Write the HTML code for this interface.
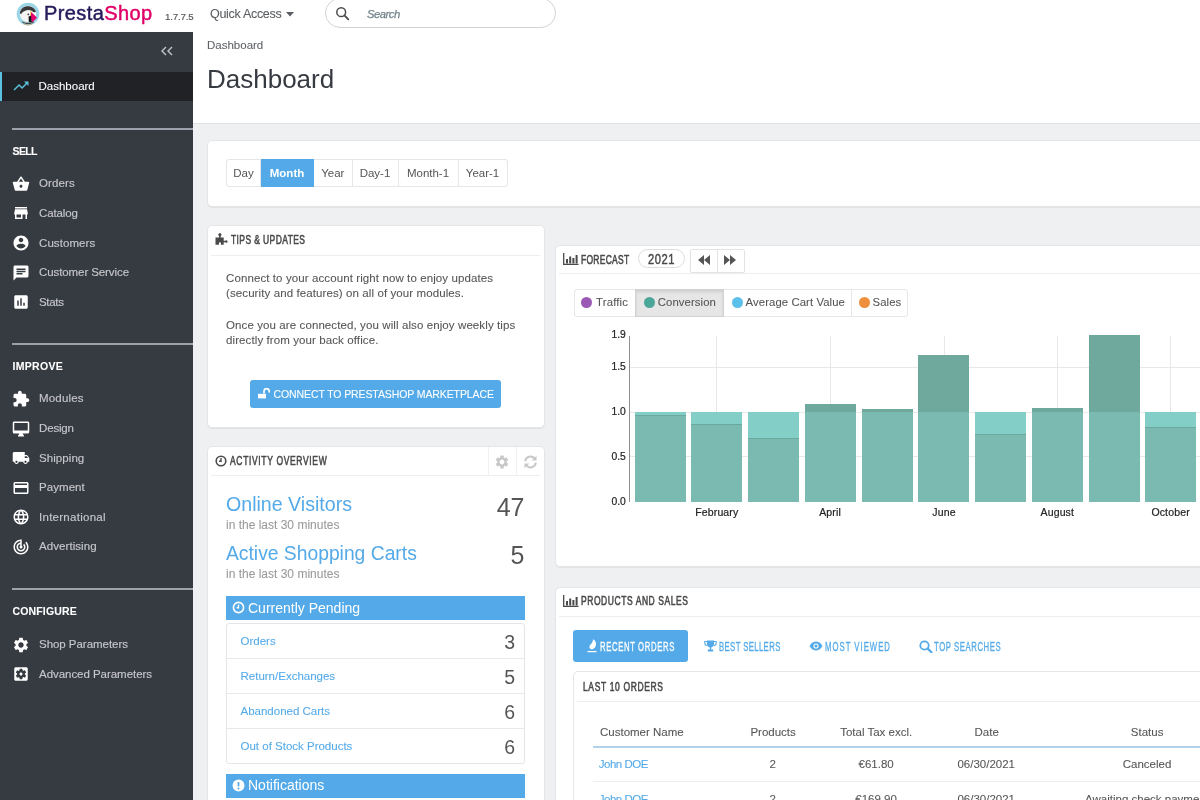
<!DOCTYPE html>
<html><head><meta charset="utf-8">
<style>
*{box-sizing:border-box}
html,body{margin:0;padding:0}
body{width:1200px;height:800px;overflow:hidden;position:relative;-webkit-font-smoothing:antialiased;will-change:transform;background:#eff0f2;font-family:"Liberation Sans",sans-serif;color:#555}
.a{position:absolute}
.t{position:absolute;white-space:nowrap;line-height:1;-webkit-text-stroke:0.08px currentColor}
.cd{display:inline-block;transform-origin:0 0}
#hdr{left:0;top:0;width:1200px;height:32px;background:#fff}
#side{left:0;top:32px;width:193px;height:768px;background:#363a41}
#phead{left:193px;top:32px;width:1007px;height:92px;background:#fff;border-bottom:1px solid #e0e3e6}
.panel{position:absolute;background:#fff;border:1px solid #e3e5e8;border-radius:5px;box-shadow:0 1px 1px rgba(0,0,0,.06)}
.hline{position:absolute;height:1px;background:#eceeef}
.nav{color:#c6c7ca;font-size:11.5px;-webkit-text-stroke:0.15px #c6c7ca}
.navh{color:#fff;font-weight:bold;font-size:10.5px}
.btn{position:absolute;top:159px;height:28px;border:1px solid #e4e6e9;border-left:none;background:#fff;color:#555;font-size:11.5px;line-height:1;text-align:center}
.btn span{position:absolute;left:0;right:0;top:7.6px}
.ph{position:absolute;white-space:nowrap;line-height:1;font-size:12.5px;color:#4a4a4a;transform-origin:0 0;-webkit-text-stroke:0.6px #4a4a4a}
.sico{position:absolute;left:13px;width:16px;height:16px;fill:#fff}
.sep{position:absolute;left:12px;width:181px;height:2px;background:#9ca2ab}
</style></head><body>
<!-- HEADER -->
<div id="hdr" class="a">
<svg class="a" style="left:16.4px;top:1.9px" width="24" height="24" viewBox="0 0 24 24">
<circle cx="12" cy="12" r="11.3" fill="#9ad6e5"/>
<circle cx="12" cy="12" r="8.2" fill="#f4f4f4"/>
<path d="M3.9 11.5 C4.2 7 7.5 4.3 12 4.3 C16.2 4.3 19.3 6.8 19.9 10 L17.5 10.3 C15.5 8.3 13.5 7.8 11 8.2 C8.5 8.6 6.5 9.8 5.2 12 Z" fill="#3a3a3c"/>
<circle cx="12.3" cy="12.3" r="0.9" fill="#3a3a3c"/>
<path d="M14.3 9.3 L15.6 9.6 L15.2 14 L14.2 13.6 Z" fill="#efc13f"/>
<path d="M15.2 9.9 L21 15.8 L15.8 20.8 L14.8 15.2 Z" fill="#e3006d"/>
<path d="M12.6 14.5 L15 13.8 L15.8 20.5 L12.8 20 Z" fill="#151515"/>
<path d="M6 19.2 C8.5 21.2 15.5 21.4 18 19.3 L17.6 20.8 C15 22.7 9 22.7 6.5 20.8 Z" fill="#4a4a48"/>
<path d="M7.5 21.3 C10 22.8 14 22.8 16.5 21.3 L16 22.6 C13.5 23.8 10.5 23.8 8 22.6 Z" fill="#c2b497"/>
</svg>
<div class="t" style="left:44px;top:3.2px;font-size:20px;letter-spacing:0.4px;color:#251b5b;-webkit-text-stroke:0.45px #251b5b">Presta<span style="color:#df0067;-webkit-text-stroke:0.45px #df0067">Shop</span></div>
<div class="t" style="left:165px;top:12px;font-size:9.8px;letter-spacing:-0.2px;color:#555;-webkit-text-stroke:0.15px #555">1.7.7.5</div>
<div class="t" style="left:210px;top:7.8px;font-size:12.5px;letter-spacing:-0.3px;color:#5b5e63">Quick Access</div>
<svg class="a" style="left:286px;top:12px" width="8" height="5" viewBox="0 0 8 5"><path d="M0 0 L8 0 L4 4.5Z" fill="#5b5e63"/></svg>
<div class="a" style="left:325px;top:-2px;width:231px;height:30px;border:1px solid #cfd4d6;border-radius:15px"></div>
<svg class="a" style="left:335px;top:6px" width="15" height="15" viewBox="0 0 15 15"><circle cx="6.2" cy="6.2" r="4.4" fill="none" stroke="#4a4a4a" stroke-width="1.5"/><path d="M9.4 9.4 L13.3 13.3" stroke="#4a4a4a" stroke-width="1.8" stroke-linecap="round"/></svg>
<div class="t" style="left:367px;top:9.4px;font-size:11.3px;font-style:italic;letter-spacing:-0.5px;color:#72838a;-webkit-text-stroke:0.25px #72838a">Search</div>
</div>
<!-- SIDEBAR -->
<div id="side" class="a">
<svg class="a" style="left:160px;top:14px" width="14" height="10" viewBox="0 0 14 10"><path d="M6 1 L2 5 L6 9 M12 1 L8 5 L12 9" fill="none" stroke="#c4c6ca" stroke-width="1.4"/></svg>
<div class="a" style="left:0;top:40px;width:193px;height:29px;background:#202226"></div><div class="a" style="left:0;top:40px;width:2px;height:29px;background:#5ac2df"></div>
<svg class="a" style="left:11.5px;top:45px" width="18" height="18" viewBox="0 0 24 24"><path fill="#5ac2df" d="M16 6l2.29 2.29-4.88 4.88-4-4L2 16.59 3.41 18l6-6 4 4 6.3-6.29L22 12V6z"/></svg><div class="t" style="left:38.5px;top:49.27px;font-size:11.5px;color:#fff">Dashboard</div>
<div class="sep" style="top:96px"></div>
<div class="t navh" style="left:12.5px;top:113.51px;letter-spacing:-0.6px">SELL</div>
<svg class="a" style="left:11.75px;top:142.75px" width="18" height="18" viewBox="0 0 24 24"><path fill="#fff" d="M17.21 9l-4.38-6.56c-.19-.28-.51-.42-.83-.42-.32 0-.64.14-.83.43L6.79 9H2c-.55 0-1 .45-1 1 0 .09.01.18.04.27l2.54 9.27c.23.84 1 1.46 1.92 1.46h13c.92 0 1.69-.62 1.93-1.46l2.54-9.27L23 10c0-.55-.45-1-1-1h-4.79zM9 9l3-4.4L15 9H9zm3 8c-1.1 0-2-.9-2-2s.9-2 2-2 2 .9 2 2-.9 2-2 2z"/></svg><div class="t nav" style="left:39px;top:146.32px;letter-spacing:0.13px">Orders</div>
<svg class="a" style="left:11.75px;top:172.35px" width="18" height="18" viewBox="0 0 24 24"><path fill="#fff" d="M20 4H4v2h16V4zm1 10v-2l-1-5H4l-1 5v2h1v6h10v-6h4v6h2v-6h1zm-9 4H6v-4h6v4z"/></svg><div class="t nav" style="left:39px;top:175.92px;letter-spacing:-0.11px">Catalog</div>
<svg class="a" style="left:11.75px;top:201.95px" width="18" height="18" viewBox="0 0 24 24"><path fill="#fff" d="M12 2C6.48 2 2 6.48 2 12s4.48 10 10 10 10-4.48 10-10S17.52 2 12 2zm0 3c1.66 0 3 1.34 3 3s-1.34 3-3 3-3-1.34-3-3 1.34-3 3-3zm0 14.2c-2.5 0-4.71-1.28-6-3.22.03-1.990 4-3.08 6-3.08 1.99 0 5.97 1.09 6 3.08-1.29 1.94-3.5 3.22-6 3.22z"/></svg><div class="t nav" style="left:39px;top:205.52px;letter-spacing:0.08px">Customers</div>
<svg class="a" style="left:11.75px;top:231.55px" width="18" height="18" viewBox="0 0 24 24"><path fill="#fff" d="M20 2H4c-1.1 0-1.99.9-1.99 2L2 22l4-4h14c1.1 0 2-.9 2-2V4c0-1.1-.9-2-2-2zM6 9h12v2H6V9zm8 5H6v-2h8v2zm4-6H6V6h12v2z"/></svg><div class="t nav" style="left:39px;top:235.12px;letter-spacing:-0.09px">Customer Service</div>
<svg class="a" style="left:11.75px;top:261.15px" width="18" height="18" viewBox="0 0 24 24"><path fill="#fff" d="M19 3H5c-1.1 0-2 .9-2 2v14c0 1.1.9 2 2 2h14c1.1 0 2-.9 2-2V5c0-1.1-.9-2-2-2zM9 17H7v-7h2v7zm4 0h-2V7h2v10zm4 0h-2v-4h2v4z"/></svg><div class="t nav" style="left:39px;top:264.72px;letter-spacing:-0.3px">Stats</div>
<div class="sep" style="top:311px"></div>
<div class="t navh" style="left:12.5px;top:328.61px;letter-spacing:0.3px">IMPROVE</div>
<svg class="a" style="left:11.75px;top:357.90px" width="18" height="18" viewBox="0 0 24 24"><path fill="#fff" d="M20.5 11H19V7c0-1.1-.9-2-2-2h-4V3.5C13 2.12 11.88 1 10.5 1S8 2.12 8 3.5V5H4c-1.1 0-1.99.9-1.99 2v3.8H3.5c1.49 0 2.7 1.21 2.7 2.7s-1.21 2.7-2.7 2.7H2V20c0 1.1.9 2 2 2h3.8v-1.5c0-1.490 1.21-2.7 2.7-2.7 1.49 0 2.7 1.21 2.7 2.7V22H17c1.1 0 2-.9 2-2v-4h1.5c1.38 0 2.5-1.12 2.5-2.5S21.88 11 20.5 11z"/></svg><div class="t nav" style="left:39px;top:361.47px;letter-spacing:0.17px">Modules</div>
<svg class="a" style="left:11.75px;top:387.50px" width="18" height="18" viewBox="0 0 24 24"><path fill="#fff" d="M21 2H3c-1.1 0-2 .9-2 2v12c0 1.1.9 2 2 2h7l-2 3v1h8v-1l-2-3h7c1.1 0 2-.9 2-2V4c0-1.1-.9-2-2-2zm0 12H3V4h18v10z"/></svg><div class="t nav" style="left:39px;top:391.07px;letter-spacing:-0.16px">Design</div>
<svg class="a" style="left:11.75px;top:417.10px" width="18" height="18" viewBox="0 0 24 24"><path fill="#fff" d="M20 8h-3V4H3c-1.1 0-2 .9-2 2v11h2c0 1.66 1.34 3 3 3s3-1.34 3-3h6c0 1.66 1.34 3 3 3s3-1.34 3-3h2v-5l-3-4zM6 18.5c-.83 0-1.5-.67-1.5-1.5s.67-1.5 1.5-1.5 1.5.67 1.5 1.5-.67 1.5-1.5 1.5zm13.5-9l1.96 2.5H17V9.5h2.5zm-1.5 9c-.83 0-1.5-.67-1.5-1.5s.67-1.5 1.5-1.5 1.5.67 1.5 1.5-.67 1.5-1.5 1.5z"/></svg><div class="t nav" style="left:39px;top:420.67px;letter-spacing:0.07px">Shipping</div>
<svg class="a" style="left:11.75px;top:446.70px" width="18" height="18" viewBox="0 0 24 24"><path fill="#fff" d="M20 4H4c-1.11 0-1.99.89-1.99 2L2 18c0 1.11.89 2 2 2h16c1.11 0 2-.89 2-2V6c0-1.11-.89-2-2-2zm0 14H4v-6h16v6zm0-10H4V6h16v2z"/></svg><div class="t nav" style="left:39px;top:450.27px;letter-spacing:0.06px">Payment</div>
<svg class="a" style="left:11.75px;top:476.30px" width="18" height="18" viewBox="0 0 24 24"><path fill="#fff" d="M11.99 2C6.47 2 2 6.48 2 12s4.47 10 9.99 10C17.52 22 22 17.52 22 12S17.52 2 11.99 2zm6.93 6h-2.950c-.32-1.25-.78-2.45-1.38-3.56 1.84.63 3.37 1.91 4.33 3.56zM12 4.04c.83 1.2 1.48 2.53 1.91 3.96h-3.82c.43-1.43 1.08-2.76 1.91-3.96zM4.26 14C4.1 13.36 4 12.69 4 12s.1-1.36.26-2h3.38c-.08.66-.14 1.32-.14 2 0 .68.06 1.34.14 2H4.26zm.82 2h2.95c.32 1.25.78 2.45 1.38 3.56-1.84-.63-3.37-1.9-4.33-3.56zm2.95-8H5.08c.96-1.66 2.49-2.93 4.33-3.56C8.81 5.55 8.35 6.75 8.03 8zM12 19.96c-.83-1.2-1.48-2.53-1.91-3.96h3.82c-.43 1.43-1.08 2.76-1.91 3.96zM14.34 14H9.66c-.09-.66-.16-1.32-.16-2 0-.68.07-1.35.16-2h4.68c.09.65.16 1.32.16 2 0 .68-.07 1.34-.16 2zm.25 5.56c.6-1.11 1.06-2.31 1.38-3.56h2.95c-.96 1.65-2.49 2.93-4.33 3.56zM16.36 14c.08-.66.14-1.32.14-2 0-.68-.06-1.34-.14-2h3.38c.16.64.26 1.31.26 2s-.1 1.36-.26 2h-3.38z"/></svg><div class="t nav" style="left:39px;top:479.87px;letter-spacing:0.27px">International</div>
<svg class="a" style="left:11.75px;top:505.90px" width="18" height="18" viewBox="0 0 24 24"><path fill="#fff" d="M19.07 4.93l-1.41 1.41C19.1 7.79 20 9.79 20 12c0 4.42-3.58 8-8 8s-8-3.58-8-8c0-4.08 3.05-7.44 7-7.93v2.02C8.16 6.57 6 9.03 6 12c0 3.31 2.69 6 6 6s6-2.69 6-6c0-1.66-.67-3.16-1.76-4.24l-1.41 1.41C15.55 9.9 16 10.9 16 12c0 2.21-1.79 4-4 4s-4-1.79-4-4c0-1.86 1.28-3.410 3-3.86v2.14c-.6.35-1 .98-1 1.72 0 1.1.9 2 2 2s2-.9 2-2c0-.74-.4-1.38-1-1.72V2h-1C6.48 2 2 6.48 2 12s4.48 10 10 10 10-4.48 10-10c0-2.76-1.12-5.26-2.93-7.07z"/></svg><div class="t nav" style="left:39px;top:509.47px;letter-spacing:0.07px">Advertising</div>
<div class="sep" style="top:556px"></div>
<div class="t navh" style="left:12.5px;top:573.51px;letter-spacing:0.15px">CONFIGURE</div>
<svg class="a" style="left:11.75px;top:603.50px" width="18" height="18" viewBox="0 0 24 24"><path fill="#fff" d="M19.14 12.94c.04-.3.06-.61.06-.94 0-.32-.02-.64-.07-.94l2.03-1.58c.18-.14.23-.41.12-.61l-1.92-3.32c-.12-.22-.37-.29-.59-.22l-2.39.96c-.5-.38-1.03-.7-1.62-.94l-.36-2.54c-.04-.24-.24-.41-.48-.41h-3.84c-.24 0-.43.17-.47.41l-.36 2.54c-.59.24-1.13.57-1.62.94l-2.39-.96c-.22-.08-.47 0-.59.22L2.74 8.87c-.12.21-.08.47.12.61l2.03 1.58c-.05.3-.09.63-.09.94s.02.64.07.94l-2.03 1.58c-.18.14-.23.41-.12.61l1.92 3.32c.12.22.37.29.59.22l2.39-.96c.5.38 1.03.7 1.62.94l.36 2.54c.05.24.24.41.48.41h3.84c.24 0 .44-.17.47-.41l.36-2.54c.59-.24 1.13-.56 1.62-.94l2.39.96c.22.08.47 0 .59-.22l1.920-3.32c.12-.22.07-.47-.12-.61l-2.01-1.58zM12 15.6c-1.98 0-3.6-1.62-3.6-3.6s1.62-3.6 3.6-3.6 3.6 1.62 3.6 3.6-1.62 3.6-3.6 3.6z"/></svg><div class="t nav" style="left:39px;top:607.07px;letter-spacing:-0.04px">Shop Parameters</div>
<svg class="a" style="left:11.75px;top:633.10px" width="18" height="18" viewBox="0 0 24 24"><path fill="#fff" d="M12 10c-1.1 0-2 .9-2 2s.9 2 2 2 2-.9 2-2-.9-2-2-2zm7-7H5c-1.11 0-2 .9-2 2v14c0 1.1.89 2 2 2h14c1.11 0 2-.9 2-2V5c0-1.1-.89-2-2-2zm-1.75 9c0 .23-.02.46-.05.68l1.48 1.16c.13.11.17.3.08.45l-1.4 2.42c-.09.15-.27.21-.43.15l-1.74-.7c-.36.28-.76.51-1.18.69l-.26 1.85c-.03.17-.18.3-.35.3h-2.8c-.17 0-.32-.13-.35-.29l-.26-1.85c-.43-.18-.82-.41-1.18-.69l-1.74.7c-.16.06-.34 0-.43-.15l-1.4-2.42c-.09-.15-.05-.34.08-.45l1.48-1.16c-.03-.23-.05-.46-.05-.69 0-.23.02-.46.05-.68l-1.48-1.16c-.13-.11-.17-.3-.08-.45l1.4-2.42c.09-.15.27-.21.43-.15l1.74.7c.36-.28.76-.51 1.18-.69l.26-1.85c.03-.17.18-.3.35-.3h2.8c.17 0 .32.13.35.29l.26 1.85c.43.18.82.41 1.18.69l1.74-.7c.16-.06.34 0 .43.15l1.4 2.42c.09.15.05.34-.08.45l-1.48 1.16c.03.23.05.46.05.69z"/></svg><div class="t nav" style="left:39px;top:636.67px;letter-spacing:-0.04px">Advanced Parameters</div>
</div>
<!-- PAGE HEAD -->
<div id="phead" class="a"></div>
<div class="t" style="left:207px;top:39.5px;font-size:11.5px;color:#5f6368">Dashboard</div>
<div class="t" style="left:207px;top:65.7px;-webkit-text-stroke:0;font-size:26px;color:#363a41">Dashboard</div>
<!-- DATE PANEL -->
<div class="panel" style="left:207px;top:140px;width:1020px;height:67px"></div>
<div class="btn" style="left:226px;width:35px;border-left:1px solid #e4e6e9;border-radius:3px 0 0 3px"><span>Day</span></div>
<div class="btn" style="left:261px;width:53px;background:#54aae8;border-color:#54aae8;color:#fff;font-weight:bold"><span>Month</span></div>
<div class="btn" style="left:314px;width:38.5px"><span>Year</span></div>
<div class="btn" style="left:352.5px;width:46px"><span>Day-1</span></div>
<div class="btn" style="left:398.5px;width:60px"><span>Month-1</span></div>
<div class="btn" style="left:458.5px;width:49px;border-radius:0 3px 3px 0"><span>Year-1</span></div>
<!-- TIPS PANEL -->
<div class="panel" style="left:207px;top:225px;width:338px;height:203px"></div>
<svg class="a" style="left:213px;top:232px" width="16" height="14" viewBox="0 0 16 14"><path d="M2.5 5.6H6.1V4.1A1.6 1.6 0 1 1 7.7 4.1V5.6H10.7V8.8H12.3A1.25 1.25 0 1 1 12.3 10.2H10.7V12.8H7.9V11.2A1 1 0 0 0 5.9 11.2V12.8H2.5Z" fill="#4a4a4a"/></svg>
<div class="ph" style="left:231px;top:234.4px;transform:scaleX(0.68);letter-spacing:0.588px">TIPS &amp; UPDATES</div>
<div class="hline" style="left:211px;top:255px;width:329px"></div>
<div class="t" style="left:226px;top:273px;font-size:11.5px;letter-spacing:0.1px;color:#555">Connect to your account right now to enjoy updates</div>
<div class="t" style="left:226px;top:288px;font-size:11.5px;letter-spacing:0.1px;color:#555">(security and features) on all of your modules.</div>
<div class="t" style="left:226px;top:320.3px;font-size:11.5px;letter-spacing:0.1px;color:#555">Once you are connected, you will also enjoy weekly tips</div>
<div class="t" style="left:226px;top:334.8px;font-size:11.5px;letter-spacing:0.1px;color:#555">directly from your back office.</div>
<div class="a" style="left:250px;top:380px;width:251px;height:28px;background:#54aae8;border-radius:3px"></div>
<svg class="a" style="left:257px;top:387.5px" width="14" height="12" viewBox="0 0 14 12"><path d="M1 5.8h8v4.6H1z" fill="#fff"/><path d="M7 5.5V3.2a2.6 2.6 0 0 1 5.2 0V4.5" fill="none" stroke="#fff" stroke-width="1.7"/></svg>
<div class="t" style="left:273.5px;top:388.6px;font-size:10.5px;letter-spacing:-0.1px;color:#fff">CONNECT TO PRESTASHOP MARKETPLACE</div>
<!-- ACTIVITY PANEL -->
<div class="panel" style="left:207px;top:446px;width:338px;height:400px"></div>
<svg class="a" style="left:215px;top:455px" width="12" height="12" viewBox="0 0 12 12"><circle cx="6" cy="6" r="4.8" fill="none" stroke="#4a4a4a" stroke-width="1.6"/><path d="M6 3v3.3H4" fill="none" stroke="#4a4a4a" stroke-width="1.4"/></svg>
<div class="ph" style="left:230px;top:455.4px;transform:scaleX(0.68);letter-spacing:0.972px">ACTIVITY OVERVIEW</div>
<div class="a" style="left:488px;top:447px;width:1px;height:28px;background:#f0f1f2"></div>
<div class="a" style="left:516px;top:447px;width:1px;height:28px;background:#f0f1f2"></div>
<svg class="a" style="left:494px;top:454px" width="16" height="16" viewBox="0 0 24 24"><path fill="#c8c8c8" d="M19.14 12.94c.04-.3.06-.61.06-.94 0-.32-.02-.64-.07-.94l2.03-1.58c.18-.14.23-.41.12-.61l-1.92-3.32c-.12-.22-.37-.29-.59-.22l-2.39.96c-.5-.38-1.03-.7-1.62-.94l-.36-2.54c-.04-.24-.24-.41-.48-.41h-3.84c-.24 0-.43.17-.47.41l-.36 2.54c-.59.24-1.13.57-1.62.94l-2.39-.96c-.22-.08-.47 0-.59.22L2.74 8.87c-.12.21-.08.47.12.61l2.03 1.58c-.05.3-.09.63-.09.94s.02.64.07.94l-2.03 1.58c-.18.14-.23.41-.12.61l1.92 3.32c.12.22.37.29.59.22l2.39-.96c.5.38 1.030.7 1.62.94l.36 2.54c.05.24.24.41.48.41h3.84c.24 0 .44-.17.47-.41l.36-2.54c.59-.24 1.13-.56 1.62-.94l2.39.96c.22.08.47 0 .59-.22l1.92-3.32c.12-.22.07-.47-.12-.61l-2.01-1.58zM12 15.6c-1.98 0-3.6-1.62-3.6-3.6s1.62-3.6 3.6-3.6 3.6 1.62 3.6 3.6-1.62 3.6-3.6 3.6z"/></svg>
<svg class="a" style="left:523px;top:455px" width="15" height="14" viewBox="0 0 15 14"><path d="M2.2 6.3A5.3 5.3 0 0 1 11.6 3.6" fill="none" stroke="#c8c8c8" stroke-width="2"/><path d="M13.5 0.8v4.8H8.7z" fill="#c8c8c8"/><path d="M12.8 7.7A5.3 5.3 0 0 1 3.4 10.4" fill="none" stroke="#c8c8c8" stroke-width="2"/><path d="M1.5 13.2V8.4h4.8z" fill="#c8c8c8"/></svg>
<div class="hline" style="left:211px;top:475px;width:329px"></div>
<div class="t" style="left:226px;top:495.3px;-webkit-text-stroke:0;font-size:19.6px;color:#54aae8">Online Visitors</div>
<div class="t" style="left:226px;top:518.9px;font-size:12px;color:#9a9a9a">in the last 30 minutes</div>
<div class="t" style="left:400px;width:124.5px;text-align:right;top:494.5px;-webkit-text-stroke:0;font-size:25px;color:#555">47</div>
<div class="t" style="left:226px;top:544px;-webkit-text-stroke:0;font-size:19.3px;color:#54aae8">Active Shopping Carts</div>
<div class="t" style="left:226px;top:568.4px;font-size:12px;color:#9a9a9a">in the last 30 minutes</div>
<div class="t" style="left:400px;width:124.5px;text-align:right;top:542.5px;-webkit-text-stroke:0;font-size:25px;color:#555">5</div>
<div class="a" style="left:226px;top:596px;width:299px;height:23.5px;background:#54aae8"></div>
<svg class="a" style="left:232px;top:601px" width="13" height="13" viewBox="0 0 12 12"><circle cx="6" cy="6" r="4.7" fill="none" stroke="#fff" stroke-width="1.5"/><path d="M6 3.2v3H4.2" fill="none" stroke="#fff" stroke-width="1.3"/></svg>
<div class="t" style="left:248px;top:601.1px;-webkit-text-stroke:0;font-size:14px;color:#fff">Currently Pending</div>
<div class="a" style="left:226px;top:623px;width:299px;height:141px;border:1px solid #e3e5e8;border-radius:3px"></div>
<div class="a" style="left:227px;top:658px;width:297px;height:1px;background:#e8e9eb"></div>
<div class="a" style="left:227px;top:693px;width:297px;height:1px;background:#e8e9eb"></div>
<div class="a" style="left:227px;top:728px;width:297px;height:1px;background:#e8e9eb"></div>
<div class="t" style="left:240.5px;top:635.8px;font-size:11.5px;color:#54aae8">Orders</div>
<div class="t" style="left:240.5px;top:670.9px;font-size:11.5px;color:#54aae8">Return/Exchanges</div>
<div class="t" style="left:240.5px;top:706px;font-size:11.5px;color:#54aae8">Abandoned Carts</div>
<div class="t" style="left:240.5px;top:741.1px;font-size:11.5px;color:#54aae8">Out of Stock Products</div>
<div class="t" style="left:400px;width:115px;text-align:right;top:632.9px;-webkit-text-stroke:0;font-size:19.5px;color:#555">3</div>
<div class="t" style="left:400px;width:115px;text-align:right;top:668px;-webkit-text-stroke:0;font-size:19.5px;color:#555">5</div>
<div class="t" style="left:400px;width:115px;text-align:right;top:703.1px;-webkit-text-stroke:0;font-size:19.5px;color:#555">6</div>
<div class="t" style="left:400px;width:115px;text-align:right;top:738.2px;-webkit-text-stroke:0;font-size:19.5px;color:#555">6</div>
<div class="a" style="left:226px;top:774px;width:299px;height:23.5px;background:#54aae8"></div>
<svg class="a" style="left:232px;top:779px" width="13" height="13" viewBox="0 0 12 12"><circle cx="6" cy="6" r="5.5" fill="#fff"/><path d="M6 2.8v4" stroke="#54aae8" stroke-width="1.6"/><circle cx="6" cy="8.8" r="0.9" fill="#54aae8"/></svg>
<div class="t" style="left:248px;top:778.3px;-webkit-text-stroke:0;font-size:14px;color:#fff">Notifications</div>
<!-- FORECAST PANEL -->
<div class="panel" style="left:555px;top:245px;width:680px;height:322px"></div>
<svg class="a" style="left:563px;top:253px" width="16" height="12" viewBox="0 0 16 12"><path d="M0.7 0v11.3H15.5" fill="none" stroke="#4a4a4a" stroke-width="1.3"/><path d="M3 6h2v4.5H3zM6.2 3.5h2v7H6.2zM9.4 5h2v5.5H9.4zM12.6 2h2v8.5h-2z" fill="#4a4a4a"/></svg>
<div class="ph" style="left:580.5px;top:253.9px;transform:scaleX(0.68);letter-spacing:0.394px">FORECAST</div>
<div class="a" style="left:638px;top:249px;width:47px;height:18.5px;border:1px solid #dcdcdc;border-radius:9.5px"></div>
<div class="ph" style="left:647.5px;top:251.9px;font-size:14px;letter-spacing:0.6px;-webkit-text-stroke:0.45px #4a4a4a;transform:scaleX(0.8)">2021</div>
<div class="a" style="left:689.5px;top:249px;width:55px;height:23.5px;border:1px solid #e3e3e3;border-radius:2px;box-shadow:0 1px 1px rgba(0,0,0,.08)"></div>
<div class="a" style="left:717px;top:250px;width:1px;height:21.5px;background:#e3e3e3"></div>
<svg class="a" style="left:697px;top:254px" width="14" height="12" viewBox="0 0 14 12"><path d="M7 1L1 6l6 5zM13 1L7 6l6 5z" fill="#555"/></svg>
<svg class="a" style="left:723px;top:254px" width="14" height="12" viewBox="0 0 14 12"><path d="M1 1l6 5-6 5zM7 1l6 5-6 5z" fill="#555"/></svg>
<div class="hline" style="left:559px;top:273px;width:660px"></div>
<div class="a" style="left:573.5px;top:288.5px;width:334px;height:28.5px;border:1px solid #e6e6e6;border-radius:3px"></div>
<div class="a" style="left:635px;top:288.5px;width:89px;height:28.5px;background:#e6e6e6;border:1px solid #d2d2d2;box-shadow:inset 0 2px 3px rgba(0,0,0,.1)"></div>
<div class="a" style="left:850.5px;top:289px;width:1px;height:27.5px;background:#e6e6e6"></div>
<div class="a" style="left:581px;top:297px;width:11px;height:11px;border-radius:50%;background:#9b59b6"></div>
<div class="a" style="left:644.2px;top:297px;width:11px;height:11px;border-radius:50%;background:#4ba69a"></div>
<div class="a" style="left:732px;top:297px;width:11px;height:11px;border-radius:50%;background:#5bc0ea"></div>
<div class="a" style="left:859px;top:297px;width:11px;height:11px;border-radius:50%;background:#ee8f3c"></div>
<div class="t" style="left:596px;top:297.4px;font-size:11.3px;letter-spacing:0.2px;color:#555">Traffic</div>
<div class="t" style="left:657.8px;top:297.4px;font-size:11.3px;letter-spacing:0.1px;color:#555">Conversion</div>
<div class="t" style="left:745.6px;top:297.4px;font-size:11.3px;letter-spacing:0.1px;color:#555">Average Cart Value</div>
<div class="t" style="left:872.5px;top:297.4px;font-size:11.3px;letter-spacing:0.1px;color:#555">Sales</div>
<div class="a" style="left:628.5px;top:335.5px;width:1.5px;height:166.5px;background:#8f8f8f"></div>
<div class="a" style="left:630px;top:366.75px;width:600px;height:1px;background:#e8e8e8"></div>
<div class="a" style="left:630px;top:411.50px;width:600px;height:1px;background:#e8e8e8"></div>
<div class="a" style="left:630px;top:456.25px;width:600px;height:1px;background:#e8e8e8"></div>
<div class="a" style="left:716.30px;top:335.5px;width:1px;height:166px;background:#e8e8e8"></div>
<div class="a" style="left:829.60px;top:335.5px;width:1px;height:166px;background:#e8e8e8"></div>
<div class="a" style="left:943.50px;top:335.5px;width:1px;height:166px;background:#e8e8e8"></div>
<div class="a" style="left:1056.80px;top:335.5px;width:1px;height:166px;background:#e8e8e8"></div>
<div class="a" style="left:1170.10px;top:335.5px;width:1px;height:166px;background:#e8e8e8"></div>
<div class="t" style="left:560px;width:65.8px;text-align:right;top:330.33px;font-size:10.3px;color:#222;-webkit-text-stroke:0.2px #222">1.9</div>
<div class="t" style="left:560px;width:65.8px;text-align:right;top:362.28px;font-size:10.3px;color:#222;-webkit-text-stroke:0.2px #222">1.5</div>
<div class="t" style="left:560px;width:65.8px;text-align:right;top:407.03px;font-size:10.3px;color:#222;-webkit-text-stroke:0.2px #222">1.0</div>
<div class="t" style="left:560px;width:65.8px;text-align:right;top:451.78px;font-size:10.3px;color:#222;-webkit-text-stroke:0.2px #222">0.5</div>
<div class="t" style="left:560px;width:65.8px;text-align:right;top:496.53px;font-size:10.3px;color:#222;-webkit-text-stroke:0.2px #222">0.0</div>
<div class="a" style="left:635px;top:412px;width:51px;height:90px;background:#7bbab1"><div class="a" style="left:0;top:0;width:100%;height:4px;background:#84cec8;border-bottom:1px solid #6aa99d"></div></div>
<div class="a" style="left:691px;top:412px;width:51px;height:90px;background:#7bbab1"><div class="a" style="left:0;top:0;width:100%;height:13px;background:#84cec8;border-bottom:1px solid #6aa99d"></div></div>
<div class="a" style="left:748px;top:412px;width:51px;height:90px;background:#7bbab1"><div class="a" style="left:0;top:0;width:100%;height:27px;background:#84cec8;border-bottom:1px solid #6aa99d"></div></div>
<div class="a" style="left:805px;top:404px;width:51px;height:98px;background:#7bbab1"><div class="a" style="left:0;top:0;width:100%;height:8px;background:#6fa89c"></div></div>
<div class="a" style="left:862px;top:409px;width:51px;height:93px;background:#7bbab1"><div class="a" style="left:0;top:0;width:100%;height:3px;background:#6fa89c"></div></div>
<div class="a" style="left:918px;top:355px;width:51px;height:147px;background:#7bbab1"><div class="a" style="left:0;top:0;width:100%;height:57px;background:#6fa89c"></div></div>
<div class="a" style="left:975px;top:412px;width:51px;height:90px;background:#7bbab1"><div class="a" style="left:0;top:0;width:100%;height:23px;background:#84cec8;border-bottom:1px solid #6aa99d"></div></div>
<div class="a" style="left:1032px;top:408px;width:51px;height:94px;background:#7bbab1"><div class="a" style="left:0;top:0;width:100%;height:4px;background:#6fa89c"></div></div>
<div class="a" style="left:1089px;top:335px;width:51px;height:167px;background:#7bbab1"><div class="a" style="left:0;top:0;width:100%;height:77px;background:#6fa89c"></div></div>
<div class="a" style="left:1145px;top:412px;width:51px;height:90px;background:#7bbab1"><div class="a" style="left:0;top:0;width:100%;height:16px;background:#84cec8;border-bottom:1px solid #6aa99d"></div></div>
<div class="a" style="left:1202px;top:412px;width:51px;height:90px;background:#7bbab1"><div class="a" style="left:0;top:0;width:100%;height:0px;background:#6fa89c"></div></div>
<div class="t" style="left:666.80px;width:100px;text-align:center;top:506.71px;font-size:10.5px;letter-spacing:0.15px;color:#222;-webkit-text-stroke:0.2px #222">February</div>
<div class="t" style="left:780.10px;width:100px;text-align:center;top:506.71px;font-size:10.5px;letter-spacing:0.15px;color:#222;-webkit-text-stroke:0.2px #222">April</div>
<div class="t" style="left:894.00px;width:100px;text-align:center;top:506.71px;font-size:10.5px;letter-spacing:0.15px;color:#222;-webkit-text-stroke:0.2px #222">June</div>
<div class="t" style="left:1007.30px;width:100px;text-align:center;top:506.71px;font-size:10.5px;letter-spacing:0.15px;color:#222;-webkit-text-stroke:0.2px #222">August</div>
<div class="t" style="left:1120.60px;width:100px;text-align:center;top:506.71px;font-size:10.5px;letter-spacing:0.15px;color:#222;-webkit-text-stroke:0.2px #222">October</div>
<!-- PRODUCTS PANEL -->
<div class="panel" style="left:555px;top:587px;width:680px;height:300px"></div>
<svg class="a" style="left:563px;top:595px" width="16" height="12" viewBox="0 0 16 12"><path d="M0.7 0v11.3H15.5" fill="none" stroke="#4a4a4a" stroke-width="1.3"/><path d="M3 6h2v4.5H3zM6.2 3.5h2v7H6.2zM9.4 5h2v5.5H9.4zM12.6 2h2v8.5h-2z" fill="#4a4a4a"/></svg>
<div class="ph" style="left:580.5px;top:594.9px;transform:scaleX(0.68);letter-spacing:0.83px">PRODUCTS AND SALES</div>
<div class="hline" style="left:559px;top:615.5px;width:660px"></div>
<div class="a" style="left:573.3px;top:630px;width:114.5px;height:32px;background:#54aae8;border-radius:3px"></div>
<svg class="a" style="left:586px;top:638px" width="12" height="15" viewBox="0 0 12 15"><path d="M7.2 1.2C10.2 3 10.6 6.2 9.4 8.6 8.6 10.4 7 11.3 5.6 11.2 4 11 3.2 9.8 3.5 8.4 3.9 6.6 5.6 6 6.2 4.6 6.6 3.6 6.9 2.5 7.2 1.2z" fill="#fff"/><path d="M1.5 13.6h9" stroke="#fff" stroke-width="1.3"/></svg>
<div class="ph" style="left:600px;top:640.52px;font-size:12.5px;color:#fff;-webkit-text-stroke:0.3px #fff;transform:scaleX(0.62);letter-spacing:0.976px">RECENT ORDERS</div>
<svg class="a" style="left:703.5px;top:640px" width="13" height="12" viewBox="0 0 13 12"><path d="M3 0.5h7v3.5c0 2-1.5 3.5-3.5 3.5S3 6 3 4z" fill="#54aae8"/><path d="M3 1.5H0.8v1.5c0 1.5 1 2.5 2.5 2.5M10 1.5h2.2v1.5c0 1.5-1 2.5-2.5 2.5" fill="none" stroke="#54aae8" stroke-width="1.1"/><path d="M5.8 7h1.4v2.5H5.8zM3.8 9.5h5.4V11.5H3.8z" fill="#54aae8"/></svg>
<div class="ph" style="left:719px;top:640.82px;font-size:12.5px;color:#54aae8;-webkit-text-stroke:0.3px #54aae8;transform:scaleX(0.62);letter-spacing:0.609px">BEST SELLERS</div>
<svg class="a" style="left:809px;top:641px" width="14" height="10" viewBox="0 0 14 10"><path d="M0.5 5C2.5 1.5 4.8 0.5 7 0.5S11.5 1.5 13.5 5C11.5 8.5 9.2 9.5 7 9.5S2.5 8.5 0.5 5z" fill="#54aae8"/><circle cx="7" cy="5" r="2.6" fill="#fff"/><circle cx="7" cy="5" r="1.6" fill="#54aae8"/></svg>
<div class="ph" style="left:825.3px;top:640.82px;font-size:12.5px;color:#54aae8;-webkit-text-stroke:0.3px #54aae8;transform:scaleX(0.62);letter-spacing:1.6px">MOST VIEWED</div>
<svg class="a" style="left:919px;top:639.5px" width="14" height="13" viewBox="0 0 14 13"><circle cx="5.5" cy="5.5" r="4.2" fill="none" stroke="#54aae8" stroke-width="1.8"/><path d="M8.6 8.6L12.5 12.3" stroke="#54aae8" stroke-width="2.2" stroke-linecap="round"/></svg>
<div class="ph" style="left:934.2px;top:640.82px;font-size:12.5px;color:#54aae8;-webkit-text-stroke:0.3px #54aae8;transform:scaleX(0.62);letter-spacing:0.904px">TOP SEARCHES</div>
<div class="a" style="left:573.3px;top:671px;width:660px;height:200px;border:1px solid #e6e6e6;border-radius:5px"></div>
<div class="ph" style="left:583px;top:681.4px;transform:scaleX(0.68);letter-spacing:0.944px">LAST 10 ORDERS</div>
<div class="hline" style="left:577px;top:700.5px;width:640px"></div>
<div class="a" style="left:592.75px;top:746px;width:620px;height:1.6px;background:#b3d2ea"></div>
<div class="a" style="left:592.75px;top:781.3px;width:620px;height:1.2px;background:#eeeeee"></div>
<div class="t" style="left:600px;top:726.77px;font-size:11.5px;color:#555">Customer Name</div>
<div class="t" style="left:673.15px;width:200px;text-align:center;top:726.77px;font-size:11.5px;color:#555">Products</div>
<div class="t" style="left:776.20px;width:200px;text-align:center;top:726.77px;font-size:11.5px;color:#555">Total Tax excl.</div>
<div class="t" style="left:886.65px;width:200px;text-align:center;top:726.77px;font-size:11.5px;color:#555">Date</div>
<div class="t" style="left:1047.15px;width:200px;text-align:center;top:726.77px;font-size:11.5px;color:#555">Status</div>
<div class="t" style="left:598.8px;top:759.47px;font-size:11.5px;color:#54aae8;letter-spacing:-0.5px">John DOE</div>
<div class="t" style="left:672.60px;width:200px;text-align:center;top:759.47px;font-size:11.5px;color:#555">2</div>
<div class="t" style="left:776.10px;width:200px;text-align:center;top:759.47px;font-size:11.5px;color:#555">€61.80</div>
<div class="t" style="left:886.20px;width:200px;text-align:center;top:759.47px;font-size:11.5px;color:#555">06/30/2021</div>
<div class="t" style="left:1047.00px;width:200px;text-align:center;top:759.47px;font-size:11.5px;color:#555">Canceled</div>
<div class="t" style="left:598.8px;top:793.97px;font-size:11.5px;color:#54aae8;letter-spacing:-0.5px">John DOE</div>
<div class="t" style="left:672.60px;width:200px;text-align:center;top:793.97px;font-size:11.5px;color:#555">2</div>
<div class="t" style="left:776.10px;width:200px;text-align:center;top:793.97px;font-size:11.5px;color:#555">€169.90</div>
<div class="t" style="left:886.20px;width:200px;text-align:center;top:793.97px;font-size:11.5px;color:#555">06/30/2021</div>
<div class="t" style="left:1047.00px;width:200px;text-align:center;top:793.97px;font-size:11.5px;color:#555">Awaiting check payment</div>
</body></html>
